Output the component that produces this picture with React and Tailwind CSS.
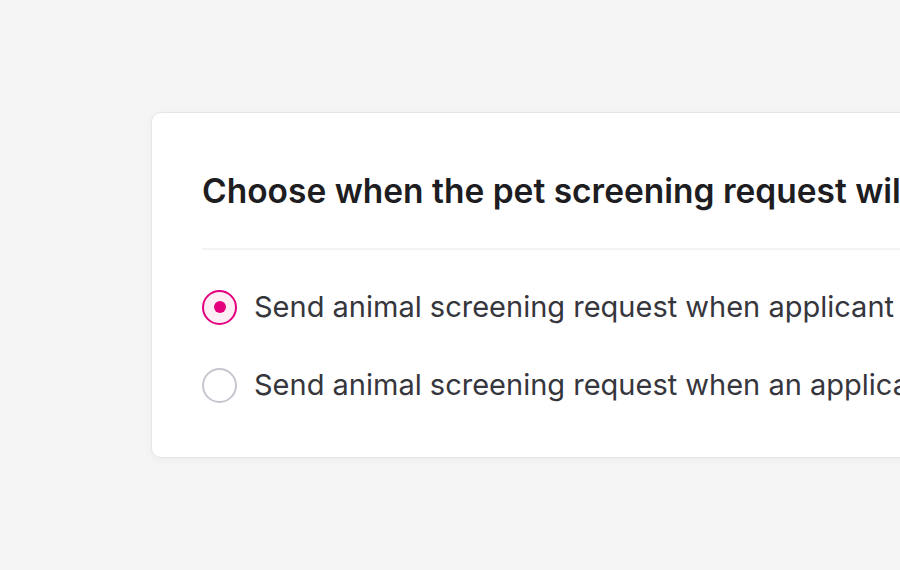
import React, { useState } from 'react';

const options = [
  'Send animal screening request when applicant submits their application',
  'Send animal screening request when an application is approved',
];

export default function App() {
  const [selected, setSelected] = useState(0);

  return (
    <div className="w-[900px] h-[570px] overflow-hidden bg-[#f5f5f5] pt-[112px] pl-[151px] font-['Inter',sans-serif]">
      <div className="w-[1000px] h-[346px] bg-white border border-[#e6e6e8] rounded-[10px] shadow-[0_2px_8px_rgba(0,0,0,0.04)] pl-[50px] pt-[56px]">
        <h2 className="text-[33.5px] leading-[44px] font-semibold text-[#1d1d22] whitespace-nowrap">
          Choose when the pet screening request will be sent
        </h2>
        <div className="h-[2px] bg-[#f3f3f4] mt-[35px] mb-[37px]" />
        <div className="flex flex-col gap-[38px]">
          {options.map((o, i) => (
            <button
              key={o}
              onClick={() => setSelected(i)}
              className="flex items-center gap-[17px] text-left"
            >
              {selected === i ? (
                <span className="w-[35px] h-[35px] shrink-0 rounded-full border-2 border-[#e4007c] bg-[#fdeef6] flex items-center justify-center">
                  <span className="w-[12px] h-[12px] rounded-full bg-[#e4007c]" />
                </span>
              ) : (
                <span className="w-[35px] h-[35px] shrink-0 rounded-full border-2 border-[#c6c6d0] bg-white" />
              )}
              <span className="text-[29px] leading-[40px] text-[#36363d] whitespace-nowrap">{o}</span>
            </button>
          ))}
        </div>
      </div>
    </div>
  );
}
